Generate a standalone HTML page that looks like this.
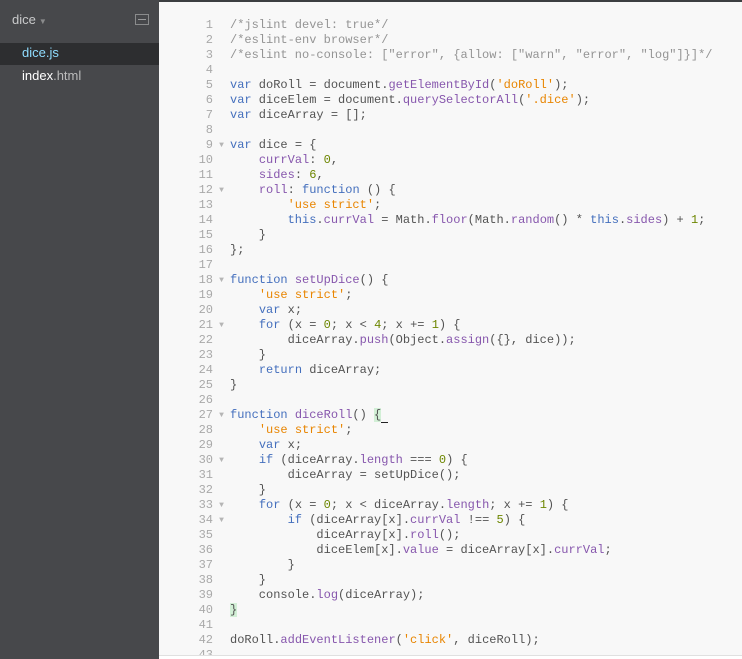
<!DOCTYPE html>
<html><head><meta charset="utf-8"><style>
*{margin:0;padding:0;box-sizing:border-box}
html,body{width:742px;height:659px;overflow:hidden}
body{background:#f8f8f8;position:relative;font-family:"Liberation Sans",sans-serif}
#top{position:absolute;left:0;top:0;width:742px;height:2px;background:#3c3f41}
#side{position:absolute;left:0;top:0;width:159px;height:659px;background:#47484b;color:#dfe2e2;font-size:13px}
#side .proj{position:absolute;left:12px;top:12px;color:#c9cacb}
#side .proj span{font-size:8px;color:#8a8b8c;margin-left:3px}
#side .icn{position:absolute;left:135px;top:14px;width:14px;height:11px;border:1px solid #8a8b8c}
#side .icn:after{content:"";position:absolute;left:2px;top:4px;width:8px;height:1px;background:#9a9b9c}
#side .sel{position:absolute;left:0;top:43px;width:159px;height:22px;background:#2d2e30}
#side .f1{position:absolute;left:22px;top:45px;color:#8fddff}
#side .f2{position:absolute;left:22px;top:68px;color:#fff}
#side .f2 span{color:#bbb}
#bot{position:absolute;left:159px;top:655px;width:583px;height:4px;background:#fff;border-top:1px solid #e0e0e0}
#code{position:absolute;left:159px;top:18px;width:583px;height:637px;overflow:hidden;font-family:"Liberation Mono",monospace;font-size:12px;line-height:15px;color:#535353}
.l{height:15px;position:relative;white-space:pre}
.n{display:inline-block;width:54px;text-align:right;color:#a9a9a9}
.a{display:inline-block;width:17px;color:#b5b5b5;font-size:8px;text-align:center;vertical-align:top}
.k{color:#446fbd}.s{color:#e88501}.m{color:#6d8600}.c{color:#949494}.p{color:#8757ad}.d{color:#8757ad}
.b{background:#d2efd6}
.cur{border-bottom:1px solid #222}
</style></head><body>
<div id="top"></div>
<div id="side">
<div class="proj">dice<span>▼</span></div>
<div class="icn"></div>
<div class="sel"></div>
<div class="f1">dice.js</div>
<div class="f2">index<span>.html</span></div>
</div>
<div id="code"><div class="l"><span class="n">1</span><span class="a"> </span><span class="c">/*jslint devel: true*/</span></div><div class="l"><span class="n">2</span><span class="a"> </span><span class="c">/*eslint-env browser*/</span></div><div class="l"><span class="n">3</span><span class="a"> </span><span class="c">/*eslint no-console: ["error", {allow: ["warn", "error", "log"]}]*/</span></div><div class="l"><span class="n">4</span><span class="a"> </span></div><div class="l"><span class="n">5</span><span class="a"> </span><span class="k">var</span> doRoll = document.<span class="p">getElementById</span>(<span class="s">'doRoll'</span>);</div><div class="l"><span class="n">6</span><span class="a"> </span><span class="k">var</span> diceElem = document.<span class="p">querySelectorAll</span>(<span class="s">'.dice'</span>);</div><div class="l"><span class="n">7</span><span class="a"> </span><span class="k">var</span> diceArray = [];</div><div class="l"><span class="n">8</span><span class="a"> </span></div><div class="l"><span class="n">9</span><span class="a">▼</span><span class="k">var</span> dice = {</div><div class="l"><span class="n">10</span><span class="a"> </span>    <span class="p">currVal</span>: <span class="m">0</span>,</div><div class="l"><span class="n">11</span><span class="a"> </span>    <span class="p">sides</span>: <span class="m">6</span>,</div><div class="l"><span class="n">12</span><span class="a">▼</span>    <span class="p">roll</span>: <span class="k">function</span> () {</div><div class="l"><span class="n">13</span><span class="a"> </span>        <span class="s">'use strict'</span>;</div><div class="l"><span class="n">14</span><span class="a"> </span>        <span class="k">this</span>.<span class="p">currVal</span> = Math.<span class="p">floor</span>(Math.<span class="p">random</span>() * <span class="k">this</span>.<span class="p">sides</span>) + <span class="m">1</span>;</div><div class="l"><span class="n">15</span><span class="a"> </span>    }</div><div class="l"><span class="n">16</span><span class="a"> </span>};</div><div class="l"><span class="n">17</span><span class="a"> </span></div><div class="l"><span class="n">18</span><span class="a">▼</span><span class="k">function</span> <span class="d">setUpDice</span>() {</div><div class="l"><span class="n">19</span><span class="a"> </span>    <span class="s">'use strict'</span>;</div><div class="l"><span class="n">20</span><span class="a"> </span>    <span class="k">var</span> x;</div><div class="l"><span class="n">21</span><span class="a">▼</span>    <span class="k">for</span> (x = <span class="m">0</span>; x &lt; <span class="m">4</span>; x += <span class="m">1</span>) {</div><div class="l"><span class="n">22</span><span class="a"> </span>        diceArray.<span class="p">push</span>(Object.<span class="p">assign</span>({}, dice));</div><div class="l"><span class="n">23</span><span class="a"> </span>    }</div><div class="l"><span class="n">24</span><span class="a"> </span>    <span class="k">return</span> diceArray;</div><div class="l"><span class="n">25</span><span class="a"> </span>}</div><div class="l"><span class="n">26</span><span class="a"> </span></div><div class="l"><span class="n">27</span><span class="a">▼</span><span class="k">function</span> <span class="d">diceRoll</span>() <span class="b">{</span><span class="cur"> </span></div><div class="l"><span class="n">28</span><span class="a"> </span>    <span class="s">'use strict'</span>;</div><div class="l"><span class="n">29</span><span class="a"> </span>    <span class="k">var</span> x;</div><div class="l"><span class="n">30</span><span class="a">▼</span>    <span class="k">if</span> (diceArray.<span class="p">length</span> === <span class="m">0</span>) {</div><div class="l"><span class="n">31</span><span class="a"> </span>        diceArray = setUpDice();</div><div class="l"><span class="n">32</span><span class="a"> </span>    }</div><div class="l"><span class="n">33</span><span class="a">▼</span>    <span class="k">for</span> (x = <span class="m">0</span>; x &lt; diceArray.<span class="p">length</span>; x += <span class="m">1</span>) {</div><div class="l"><span class="n">34</span><span class="a">▼</span>        <span class="k">if</span> (diceArray[x].<span class="p">currVal</span> !== <span class="m">5</span>) {</div><div class="l"><span class="n">35</span><span class="a"> </span>            diceArray[x].<span class="p">roll</span>();</div><div class="l"><span class="n">36</span><span class="a"> </span>            diceElem[x].<span class="p">value</span> = diceArray[x].<span class="p">currVal</span>;</div><div class="l"><span class="n">37</span><span class="a"> </span>        }</div><div class="l"><span class="n">38</span><span class="a"> </span>    }</div><div class="l"><span class="n">39</span><span class="a"> </span>    console.<span class="p">log</span>(diceArray);</div><div class="l"><span class="n">40</span><span class="a"> </span><span class="b">}</span></div><div class="l"><span class="n">41</span><span class="a"> </span></div><div class="l"><span class="n">42</span><span class="a"> </span>doRoll.<span class="p">addEventListener</span>(<span class="s">'click'</span>, diceRoll);</div><div class="l"><span class="n">43</span><span class="a"> </span></div></div>
<div id="bot"></div>
</body></html>
